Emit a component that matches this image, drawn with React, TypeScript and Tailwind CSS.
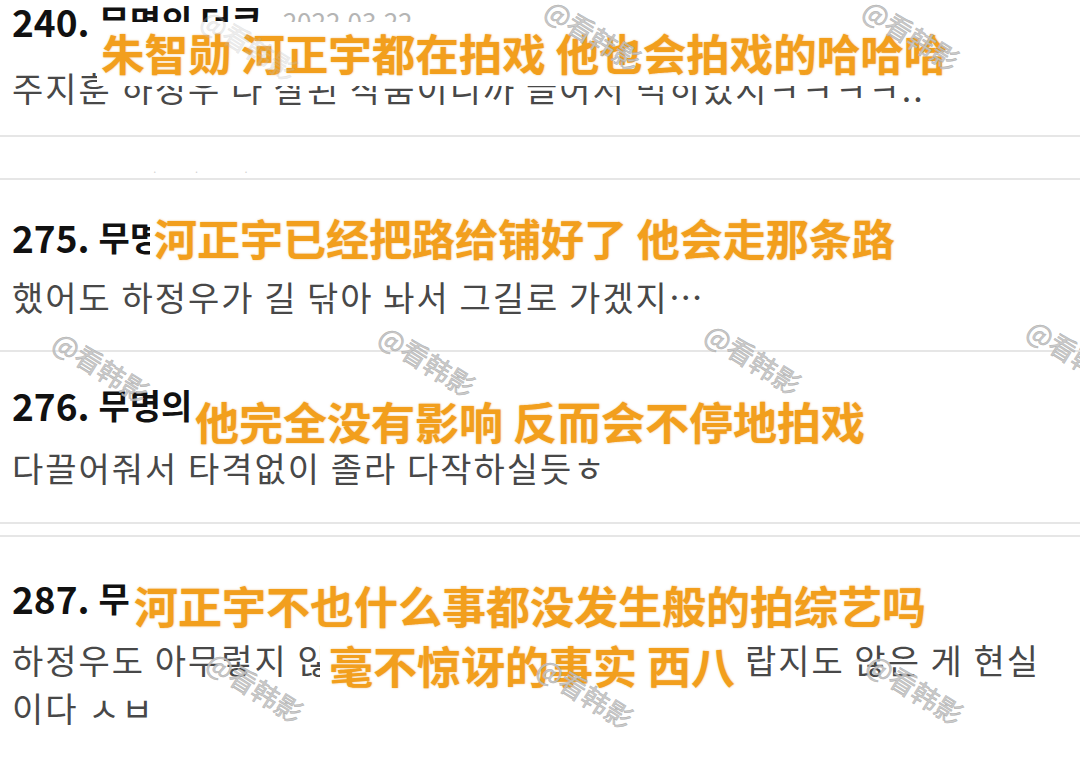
import React from 'react'

// Korean comment thread with Chinese subtitle overlays and a repeating watermark

const subtitles = [
  { text: '朱智勋 河正宇都在拍戏 他也会拍戏的哈哈哈', box: 'left-[97px] top-[22px] w-[866px] h-[64px] pl-[4px] text-[43.5px] leading-[62px]' },
  { text: '河正宇已经把路给铺好了 他会走那条路', box: 'left-[150px] top-[210px] w-[760px] h-[54px] pl-[4px] text-[43px] leading-[54px]' },
  { text: '他完全没有影响 反而会不停地拍戏', box: 'left-[192px] top-[388px] w-[684px] h-[60px] pl-[3px] pt-[6px] text-[44px] leading-[54px]' },
  { text: '河正宇不也什么事都没发生般的拍综艺吗', box: 'left-[130px] top-[578px] w-[804px] h-[54px] pl-[4px] text-[44px] leading-[54px]' },
  { text: '毫不惊讶的事实 西八', box: 'left-[320px] top-[638px] w-[424px] h-[54px] pl-[9px] text-[44px] leading-[54px]' },
]

const marks = [
  { pos: 'left-[212px] top-[4px]', faint: true },
  { pos: 'left-[556px] top-[-6px]' },
  { pos: 'left-[874px] top-[-6px]' },
  { pos: 'left-[-88px] top-[14px]' },
  { pos: 'left-[64px] top-[326px]' },
  { pos: 'left-[390px] top-[320px]' },
  { pos: 'left-[716px] top-[318px]' },
  { pos: 'left-[1038px] top-[314px]' },
  { pos: 'left-[-104px] top-[654px]' },
  { pos: 'left-[218px] top-[646px]' },
  { pos: 'left-[548px] top-[652px]' },
  { pos: 'left-[878px] top-[648px]' },
]

function Header({ no, name, date }: { no: string; name: string; date?: string }) {
  return (
    <div className="flex items-center h-[42px] leading-[42px] whitespace-nowrap">
      <span className="text-[37px] font-bold text-[#111]">{no}</span>
      <span className="ml-[9px] text-[34px] font-bold text-[#111]">{name}</span>
      {date && <span className="ml-[20px] text-[26px] text-[#b5b5b5]">{date}</span>}
    </div>
  )
}

function Body({ children, className = '' }: { children: React.ReactNode; className?: string }) {
  return (
    <div className={`text-[34px] tracking-[2px] leading-[44px] text-[#484848] whitespace-nowrap ${className}`}>{children}</div>
  )
}

export default function App() {
  return (
    <div className="relative w-[1080px] h-[780px] overflow-hidden bg-white font-['Noto_Sans_CJK_KR','Noto_Sans_CJK_SC',sans-serif]">
      <section className="h-[137px] px-[12px] border-b-2 border-[#e6e6e6]">
        <Header no="240." name="무명의 더쿠" date="2022.03.22" />
        <Body className="mt-[24px]">주지훈 하정우 다 잘된 작품이니까 끌어서 먹히었지ㅋㅋㅋㅋ..</Body>
      </section>

      <section className="h-[43px] border-b-2 border-[#e6e6e6] flex items-end gap-[36px] pl-[152px]">
        <span className="text-[10px] leading-[12px] text-[#d0d0d0]">·</span>
        <span className="text-[10px] leading-[12px] text-[#d0d0d0]">·</span>
        <span className="text-[10px] leading-[12px] text-[#d0d0d0] ml-[8px]">·</span>
      </section>

      <section className="h-[172px] px-[12px] pt-[36px] border-b-2 border-[#e6e6e6]">
        <Header no="275." name="무명의 더쿠" />
        <Body className="mt-[17px]">했어도 하정우가 길 닦아 놔서 그길로 가겠지…</Body>
      </section>

      <section className="h-[172px] px-[12px] pt-[32px] border-b-2 border-[#e6e6e6]">
        <Header no="276." name="무명의 더쿠" />
        <Body className="mt-[20px]">다끌어줘서 타격없이 졸라 다작하실듯ㅎ</Body>
      </section>

      <div className="h-[13px] border-b-2 border-[#e6e6e6]" />

      <section className="px-[12px] pt-[40px]">
        <Header no="287." name="무명의 더쿠" />
        <Body className="mt-[17px] leading-[48px]">
          하정우도 아무렇지 않게 또 작품 활동하시는 거 놀랍지도 않은 게 현실
          <br />
          이다 ㅅㅂ
        </Body>
      </section>

      {subtitles.map((s) => (
        <div
          key={s.text}
          className={`absolute bg-white whitespace-nowrap font-bold text-[#f29f1d] font-['Noto_Sans_CJK_SC',sans-serif] [text-shadow:0_0_2px_rgba(226,136,10,0.55)] ${s.box}`}
        >
          {s.text}
        </div>
      ))}

      {marks.map((m, i) => (
        <div
          key={i}
          className={`absolute rotate-[32deg] origin-top-left whitespace-nowrap text-[27px] leading-[30px] font-['Noto_Sans_CJK_SC',sans-serif] text-[#c6c6c6] [-webkit-text-stroke:0.5px_#a8a8a8] ${m.faint ? 'opacity-30' : 'opacity-90'} ${m.pos}`}
        >
          @看韩影
        </div>
      ))}
    </div>
  )
}
